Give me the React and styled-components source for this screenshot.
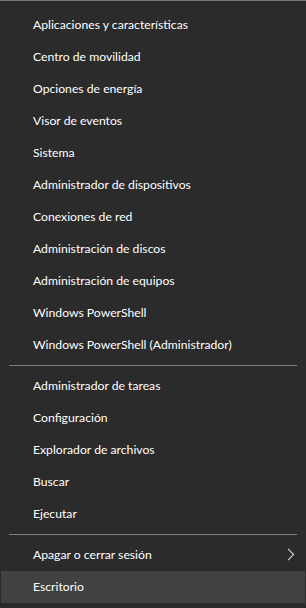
import React from 'react';
import styled, { createGlobalStyle } from 'styled-components';

const GlobalStyle = createGlobalStyle`
  html, body {
    margin: 0;
    padding: 0;
    background: #2b2b2b;
  }
`;

const Menu = styled.div`
  width: 306px;
  height: 608px;
  box-sizing: border-box;
  background: #2b2b2b;
  border-top: 1px solid #767676;
  padding: 8px 1px 0 1px;
  font-family: Lato, "Noto Sans", sans-serif;
  font-size: 12.2px;
  color: #ffffff;
  -webkit-font-smoothing: antialiased;
`;

const Item = styled.div`
  height: 32px;
  display: flex;
  align-items: center;
  justify-content: space-between;
  padding: 0 10px 1px 32px;
  box-sizing: border-box;
  background: ${(p) => (p.$active ? '#414141' : 'transparent')};
  white-space: nowrap;
`;

const Separator = styled.div`
  height: 1px;
  background: #7f7f7f;
  margin: 4px 8px 4px 8px;
`;

const Chevron = () => (
  <svg width="8" height="13" viewBox="0 0 8 13">
    <path d="M1 0.8 L6.6 6.5 L1 12.2" fill="none" stroke="#d0d0d0" strokeWidth="1.2" />
  </svg>
);

const groups = [
  [
    'Aplicaciones y características',
    'Centro de movilidad',
    'Opciones de energía',
    'Visor de eventos',
    'Sistema',
    'Administrador de dispositivos',
    'Conexiones de red',
    'Administración de discos',
    'Administración de equipos',
    'Windows PowerShell',
    'Windows PowerShell (Administrador)',
  ],
  [
    'Administrador de tareas',
    'Configuración',
    'Explorador de archivos',
    'Buscar',
    'Ejecutar',
  ],
];

const App = () => (
  <>
    <GlobalStyle />
    <Menu>
      {groups.map((g, i) => (
        <React.Fragment key={i}>
          {g.map((label) => (
            <Item key={label}>{label}</Item>
          ))}
          <Separator />
        </React.Fragment>
      ))}
      <Item>
        <span>Apagar o cerrar sesión</span>
        <Chevron />
      </Item>
      <Item $active>Escritorio</Item>
    </Menu>
  </>
);

export default App;
